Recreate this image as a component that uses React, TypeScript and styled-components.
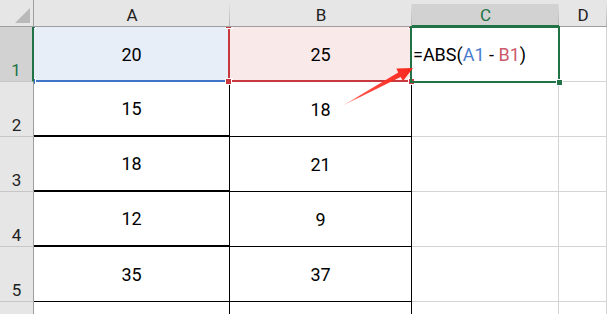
import React from 'react';
import styled, { createGlobalStyle, css } from 'styled-components';

const GlobalStyle = createGlobalStyle`
  html, body {
    margin: 0;
    padding: 0;
    background: #ffffff;
    overflow: hidden;
  }
`;

const GREEN = '#217346';
const GRID = '#d4d4d4';
const HEAD_BG = '#e6e6e6';
const HEAD_SEL = '#d2d2d2';

const Sheet = styled.div`
  position: relative;
  width: 607px;
  height: 314px;
  overflow: hidden;
  display: grid;
  grid-template-columns: 34px 196px 182px 147px 1fr;
  grid-template-rows: 27px repeat(6, 55px);
  font-family: 'Roboto', 'Noto Sans', sans-serif;
  color: #000;
`;

const Corner = styled.div`
  position: relative;
  z-index: 2;
  background: ${HEAD_BG};
  border-right: 1px solid #9e9e9e;
  border-bottom: 1px solid #9e9e9e;
  box-sizing: border-box;
  display: flex;
  align-items: flex-end;
  justify-content: flex-end;
  padding: 0 3px 3px 0;
`;

const Triangle = styled.div`
  width: 0;
  height: 0;
  border-left: 15px solid transparent;
  border-bottom: 15px solid #b9b9b9;
`;

const ColHead = styled.div<{ $active?: boolean }>`
  position: relative;
  z-index: 2;
  box-sizing: border-box;
  background: ${HEAD_BG};
  border-bottom: 1px solid #9e9e9e;
  display: flex;
  align-items: center;
  justify-content: center;
  padding-top: 4px;
  font-size: 17px;
  color: #222;

  &::before {
    content: '';
    position: absolute;
    left: 0;
    right: 1px;
    top: 4px;
    bottom: 0;
    background: ${(p) => (p.$active ? HEAD_SEL : 'transparent')};
    z-index: -1;
  }

  &::after {
    content: '';
    position: absolute;
    right: 0;
    top: 4px;
    bottom: 0;
    width: 1px;
    background: linear-gradient(#e0e0e0, #b4b4b4);
  }

  ${(p) =>
    p.$active &&
    css`
      color: ${GREEN};
      border-bottom: 2px solid ${GREEN};
    `}
`;

const RowHead = styled.div<{ $active?: boolean }>`
  position: relative;
  z-index: 2;
  box-sizing: border-box;
  background: ${(p) => (p.$active ? HEAD_SEL : HEAD_BG)};
  border-right: ${(p) => (p.$active ? `2px solid ${GREEN}` : '1px solid #9e9e9e')};
  border-bottom: 1px solid #c6c6c6;
  display: flex;
  align-items: flex-end;
  justify-content: center;
  padding-bottom: 1px;
  font-size: 17px;
  line-height: 20px;
  color: ${(p) => (p.$active ? GREEN : '#222')};
`;

type Edge = 'none' | 'thin' | 'thick';

const Cell = styled.div<{ $fill?: string; $right?: boolean; $bottom?: Edge; $left?: boolean }>`
  position: relative;
  box-sizing: border-box;
  background: ${(p) => p.$fill || '#fff'};
  border-right: 1px solid ${(p) => (p.$right ? '#000' : GRID)};
  border-bottom: ${(p) =>
    p.$bottom === 'thick' ? '2px solid #000' : p.$bottom === 'thin' ? '1px solid #000' : `1px solid ${GRID}`};
  display: flex;
  align-items: center;
  justify-content: ${(p) => (p.$left ? 'flex-start' : 'center')};
  padding-left: ${(p) => (p.$left ? '1px' : '0')};
  font-size: 18px;
  white-space: nowrap;
`;

// outline Excel draws round a cell that a formula refers to;
// its top and left edges tuck under the headers
const RangeBox = styled.div<{ $color: string }>`
  position: absolute;
  z-index: 1;
  top: -2px;
  left: -2px;
  right: -1px;
  bottom: -1px;
  border: 2px solid ${(p) => p.$color};
  pointer-events: none;
`;

const RangeHandle = styled.span<{ $color: string; $x: 'l' | 'r'; $y: 't' | 'b' }>`
  position: absolute;
  width: 5px;
  height: 5px;
  background: ${(p) => p.$color};
  outline: 1px solid #fff;
  ${(p) => (p.$x === 'l' ? 'left: -4px;' : 'right: -4px;')}
  ${(p) => (p.$y === 't' ? 'top: -4px;' : 'bottom: -4px;')}
`;

const Selection = styled.div`
  position: absolute;
  z-index: 3;
  top: -1px;
  left: -2px;
  right: -2px;
  bottom: -2px;
  border: 2px solid ${GREEN};
  pointer-events: none;
`;

const FillHandle = styled.span`
  position: absolute;
  right: -5px;
  bottom: -5px;
  width: 5px;
  height: 5px;
  background: ${GREEN};
  border: 1px solid #fff;
`;

const Ref = styled.span<{ $color: string }>`
  color: ${(p) => p.$color};
`;

const Arrow = styled.svg`
  position: absolute;
  left: 0;
  top: 0;
  z-index: 4;
  pointer-events: none;
`;

const Range: React.FC<{ color: string }> = ({ color }) => (
  <RangeBox $color={color}>
    <RangeHandle $color={color} $x="l" $y="t" />
    <RangeHandle $color={color} $x="r" $y="t" />
    <RangeHandle $color={color} $x="l" $y="b" />
    <RangeHandle $color={color} $x="r" $y="b" />
  </RangeBox>
);

const rows = [
  { a: 15, b: 18, edge: 'thick' as Edge },
  { a: 18, b: 21, edge: 'thick' as Edge },
  { a: 12, b: 9, edge: 'thick' as Edge },
  { a: 35, b: 37, edge: 'thin' as Edge },
];

const BLUE = '#3f74c8';
const RED = '#c8383f';

const App: React.FC = () => {
  return (
    <>
      <GlobalStyle />
      <Sheet>
        <Corner>
          <Triangle />
        </Corner>
        <ColHead>A</ColHead>
        <ColHead>B</ColHead>
        <ColHead $active>C</ColHead>
        <ColHead>D</ColHead>

        <RowHead $active>1</RowHead>
        <Cell $fill="#e8eef8">
          20
          <Range color={BLUE} />
        </Cell>
        <Cell $fill="#fae9e9">
          25
          <Range color={RED} />
        </Cell>
        <Cell $left>
          =ABS(<Ref $color="#4a7ccc">A1</Ref>&nbsp;-&nbsp;<Ref $color="#cc5a6a">B1</Ref>)
          <Selection>
            <FillHandle />
          </Selection>
        </Cell>
        <Cell />

        {rows.map((r, i) => (
          <React.Fragment key={i}>
            <RowHead>{i + 2}</RowHead>
            <Cell $right $bottom={r.edge}>
              {r.a}
            </Cell>
            <Cell $right $bottom="thin">
              {r.b}
            </Cell>
            <Cell />
            <Cell />
          </React.Fragment>
        ))}

        <RowHead>6</RowHead>
        <Cell $right />
        <Cell $right />
        <Cell />
        <Cell />

        <Arrow width="607" height="314" viewBox="0 0 607 314">
          <defs>
            <linearGradient id="shaft" x1="342" y1="106" x2="412" y2="68" gradientUnits="userSpaceOnUse">
              <stop offset="0" stopColor="#ff3b2f" stopOpacity="0.25" />
              <stop offset="0.25" stopColor="#ff3b2f" stopOpacity="0.9" />
              <stop offset="1" stopColor="#f8261c" />
            </linearGradient>
          </defs>
          <polygon
            points="342,106 398.2,72.6 396.4,68.5 413,68 403,80.9 400.6,77 342,106"
            fill="url(#shaft)"
          />
        </Arrow>
      </Sheet>
    </>
  );
};

export default App;
